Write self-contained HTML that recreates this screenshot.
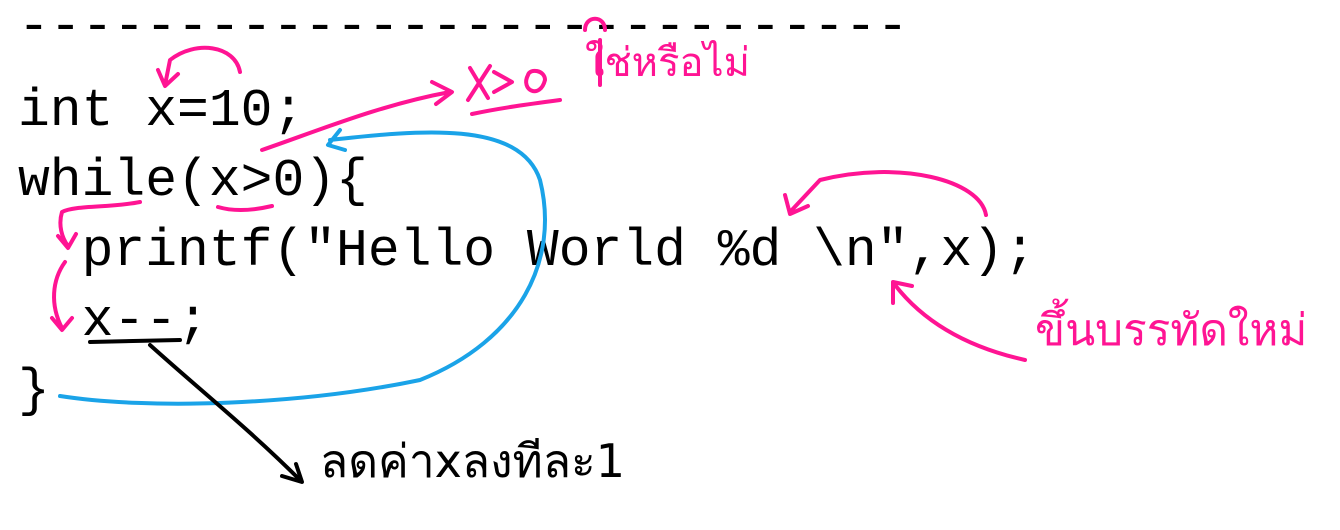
<!DOCTYPE html>
<html><head><meta charset="utf-8"><style>
html,body{margin:0;padding:0;background:#fff;width:1340px;height:530px;overflow:hidden}
pre{position:absolute;left:18px;top:76px;margin:0;font-family:"Liberation Mono",monospace;font-size:53px;line-height:70px;color:#000}
.dash{position:absolute;left:18px;top:-8px;margin:0;font-family:"Liberation Mono",monospace;font-size:53px;line-height:70px;color:#000}
svg{position:absolute;left:0;top:0}
.th{position:absolute;font-family:"DejaVu Sans","Liberation Sans",sans-serif;color:#ff1493}
</style></head><body>
<pre class="dash">----------------------------</pre>
<pre>int x=10;
while(x>0){
  printf("Hello World %d \n",x);
  x--;
}</pre>
<svg width="1340" height="530" fill="none" stroke-linecap="round" stroke-linejoin="round">
<g stroke="#ff1493" stroke-width="4">
<path d="M240 72 C235 45 195 40 170 60 L165 85 M158 70 L165 86 L178 74"/>
<path d="M262 150 C320 130 380 105 450 92 M432 82 L452 92 L436 104"/>
<path d="M470 68 L488 98 M490 66 L468 100"/>
<path d="M494 72 L512 82 L494 92"/>
<path d="M528 75 C520 90 540 100 545 80 C545 70 530 68 528 75"/>
<path d="M472 114 C500 108 530 104 560 100"/>
<path d="M218 207 C235 212 255 210 272 206"/>
<path d="M140 202 C110 208 75 205 62 212 C58 225 62 238 68 246 M58 236 L68 248 L76 234"/>
<path d="M65 262 C52 280 50 305 62 328 M52 318 L62 330 L72 318"/>
<path d="M986 215 C980 180 900 160 820 180 L790 212 M785 195 L790 214 L808 206"/>
<path d="M1025 360 C980 350 930 330 895 285 M893 303 L893 282 L912 286"/>
<path d="M600 40 L600 85 M585 30 C585 15 605 15 605 30"/>
</g>
<path d="M60 396 C150 410 300 405 420 380 C520 340 560 260 540 180 C520 120 420 130 330 140 M340 130 L328 145 L345 150" stroke="#1aa3e8" stroke-width="4"/>
<g stroke="#000" stroke-width="4">
<path d="M90 342 L180 340"/>
<path d="M150 345 C200 390 250 430 300 480 M282 476 L302 482 L296 464"/>
</g>
</svg>
<div class="th" style="left:585px;top:30px;font-size:40px">ใช่หรือไม่</div>
<div class="th" style="left:1035px;top:295px;font-size:44px">ขึ้นบรรทัดใหม่</div>
<div class="th" style="left:320px;top:425px;font-size:46px;color:#000">ลดค่าxลงทีละ1</div>
</body></html>
